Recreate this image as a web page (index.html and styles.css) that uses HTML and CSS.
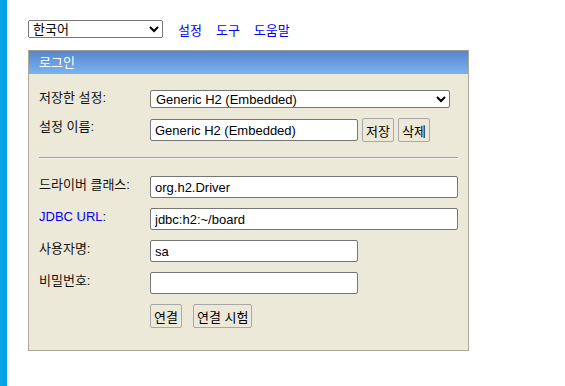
FILE: index.html
```html
<!DOCTYPE html>
<html lang="ko">
<head>
    <meta charset="UTF-8">
    <title>H2 Console</title>
    <link rel="stylesheet" href="styles.css">
</head>
<body>
    <div class="side-bar"></div>

    <div class="page">
        <div class="toolbar">
            <select class="lang-select">
                <option>한국어</option>
                <option>English</option>
            </select>
            <a href="#">설정</a>
            <a href="#">도구</a>
            <a href="#">도움말</a>
        </div>

        <div class="login">
            <div class="login__title">로그인</div>
            <form class="login__body">
                <div class="row row--first">
                    <label>저장한 설정:</label>
                    <select class="ctl ctl--saved">
                        <option>Generic H2 (Embedded)</option>
                    </select>
                </div>
                <div class="row row--tall">
                    <label>설정 이름:</label>
                    <input class="ctl ctl--short" type="text" value="Generic H2 (Embedded)">
                    <button type="button" class="btn btn--save">저장</button>
                    <button type="button" class="btn">삭제</button>
                </div>

                <hr>

                <div class="row">
                    <label>드라이버 클래스:</label>
                    <input class="ctl ctl--long" type="text" value="org.h2.Driver">
                </div>
                <div class="row">
                    <label><a href="#" class="jdbc">JDBC URL</a>:</label>
                    <input class="ctl ctl--long" type="text" value="jdbc:h2:~/board">
                </div>
                <div class="row">
                    <label>사용자명:</label>
                    <input class="ctl ctl--short" type="text" value="sa">
                </div>
                <div class="row">
                    <label>비밀번호:</label>
                    <input class="ctl ctl--short" type="password">
                </div>
                <div class="row row--tall row--actions">
                    <label></label>
                    <button type="button" class="btn">연결</button>
                    <button type="button" class="btn btn--test">연결 시험</button>
                </div>
            </form>
        </div>
    </div>
</body>
</html>
```

FILE: styles.css
```css
/* Page frame */
html, body {
    height: 100%;
}

body {
    margin: 0;
    display: flex;
    background-color: white;
    font-family: "Liberation Sans", "Noto Sans CJK KR", sans-serif;
    font-size: 13px;
    color: black;
}

.side-bar {
    width: 7px;
    flex-shrink: 0;
    background: linear-gradient(to right, #0aa6ea, #079fe2);
}

.page {
    padding: 20px 0 0 21px;
}

/* Top toolbar */
.toolbar {
    display: flex;
    align-items: center;
    height: 18px;
}

.toolbar a {
    color: #0000ff;
    text-decoration: none;
    margin-left: 14px;
}

.toolbar select + a {
    margin-left: 15px;
}

.lang-select {
    width: 135px;
    height: 18px;
    font-family: inherit;
    font-size: 13px;
    margin: 0;
}

/* Login panel */
.login {
    margin-top: 12px;
    width: 439px;
    border: 1px solid #aca899;
    border-top-color: #9c9c94;
    background-color: #ece9d8;
}

.login__title {
    height: 23px;
    line-height: 23px;
    padding-left: 10px;
    color: white;
    background: linear-gradient(to bottom, #5985cc, #79b4f0);
}

.login__body {
    padding: 16px 10px 22px 10px;
}

.row {
    display: flex;
    align-items: center;
    height: 22px;
    margin-top: 10px;
}

.row--first {
    margin-top: 0;
    height: 18px;
}

.row--tall {
    height: 24px;
}

.row label {
    align-self: flex-start;
    width: 111px;
    flex-shrink: 0;
    line-height: 16px;
    padding-top: 1px;
    color: #111;
}

.row--first label {
    padding-top: 0;
}

.jdbc {
    color: #0000ff;
    text-decoration: none;
}

.ctl {
    box-sizing: border-box;
    height: 22px;
    margin: 0;
    padding: 1px 4px;
    font-family: inherit;
    font-size: 13px;
    border: 1px solid #767676;
    border-radius: 2px;
    background-color: white;
}

.ctl--saved {
    width: 300px;
    height: 18px;
    padding: 0 1px;
}

.ctl--short {
    width: 208px;
}

.ctl--long {
    width: 308px;
}

hr {
    margin: 15px 0 17px 0;
    border: none;
    border-top: 1px solid #a5a296;
    border-bottom: 1px solid #f7f6f0;
}

/* Buttons */
.btn {
    box-sizing: border-box;
    height: 24px;
    margin: 0 0 0 4px;
    padding: 0 3px;
    font-family: inherit;
    font-size: 13px;
    color: black;
    background-color: #ece9d8;
    border: 1px solid #a8a8a8;
    border-radius: 2px;
}

.row--actions .btn {
    margin-left: 0;
}

.row--actions .btn--test {
    margin-left: 11px;
}
```
